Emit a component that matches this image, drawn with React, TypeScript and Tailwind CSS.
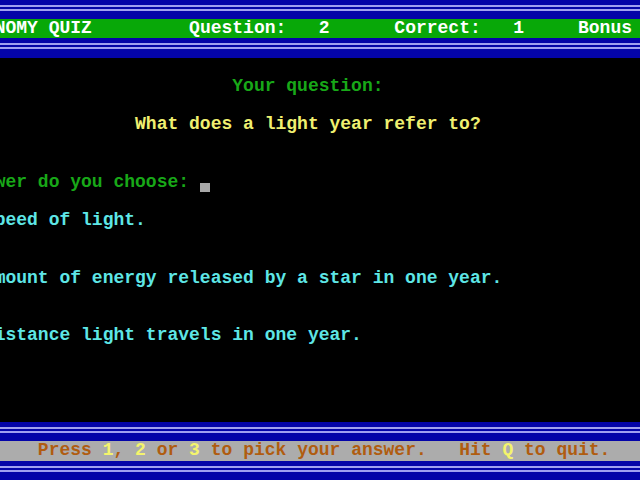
import type { ReactNode } from 'react';
import clsx from 'clsx';

// One text-mode cell is 10.8px wide and 19.2px tall (80x25 grid).
// The first visible column sits a little past column 11, so every row is shifted left.

interface Seg {
  col: number;
  text: string;
  color?: string;
}

function Rule() {
  return (
    <div className="h-[19.2px] bg-[#0404a8] pt-[5px]">
      <div className="h-[2px] bg-[#a0a0f0]" />
      <div className="h-[2px]" />
      <div className="h-[2px] bg-[#a0a0f0]" />
    </div>
  );
}

function Blank() {
  return <div className="h-[19.2px]" />;
}

function Line({ segs, className, children }: { segs: Seg[]; className?: string; children?: ReactNode }) {
  let cur = 0;
  return (
    <div className={clsx('h-[19.2px] overflow-hidden whitespace-pre', className)}>
      <div className="ml-[-124.2px]">
        {segs.map((s, i) => {
          const gap = ' '.repeat(Math.max(0, s.col - cur));
          cur = s.col + s.text.length;
          return (
            <span key={i} className={s.color}>
              {gap}
              {s.text}
            </span>
          );
        })}
        {children}
      </div>
    </div>
  );
}

const brown = 'text-[#b05c10]';
const hot = 'text-[#f4f46c]';

export default function App() {
  return (
    <div className="w-[640px] h-[480px] overflow-hidden bg-black font-['Liberation_Mono',monospace] text-[18px] leading-[19.2px] font-bold">
      <Rule />
      <Line
        className="bg-[#08a808] text-white"
        segs={[
          { col: 6, text: 'ASTRONOMY QUIZ' },
          { col: 29, text: 'Question:' },
          { col: 41, text: '2' },
          { col: 48, text: 'Correct:' },
          { col: 59, text: '1' },
          { col: 65, text: 'Bonus' },
          { col: 72, text: '0' },
        ]}
      />
      <Rule />
      <Blank />
      <Line segs={[{ col: 33, text: 'Your question:', color: 'text-[#18a818]' }]} />
      <Blank />
      <Line segs={[{ col: 24, text: 'What does a light year refer to?', color: 'text-[#f0f070]' }]} />
      <Blank />
      <Blank />
      <Line segs={[{ col: 2, text: 'Which answer do you choose:', color: 'text-[#18a818]' }]}>
        {' '}
        <span className="inline-block w-[10px] h-[9px] bg-[#a8a8a8] align-[-5px]" />
      </Line>
      <Blank />
      <Line segs={[{ col: 2, text: '1.  The speed of light.', color: 'text-[#5ee6e6]' }]} />
      <Blank />
      <Blank />
      <Line
        segs={[
          { col: 2, text: '2.  The amount of energy released by a star in one year.', color: 'text-[#5ee6e6]' },
        ]}
      />
      <Blank />
      <Blank />
      <Line
        segs={[{ col: 2, text: '3.  The distance light travels in one year.', color: 'text-[#5ee6e6]' }]}
      />
      <Blank />
      <Blank />
      <Blank />
      <Blank />
      <Rule />
      <Line
        className="bg-[#acacac]"
        segs={[
          { col: 15, text: 'Press ', color: brown },
          { col: 21, text: '1', color: hot },
          { col: 22, text: ', ', color: brown },
          { col: 24, text: '2', color: hot },
          { col: 25, text: ' or ', color: brown },
          { col: 29, text: '3', color: hot },
          { col: 30, text: ' to pick your answer.   Hit ', color: brown },
          { col: 58, text: 'Q', color: hot },
          { col: 59, text: ' to quit.', color: brown },
        ]}
      />
      <Rule />
    </div>
  );
}
